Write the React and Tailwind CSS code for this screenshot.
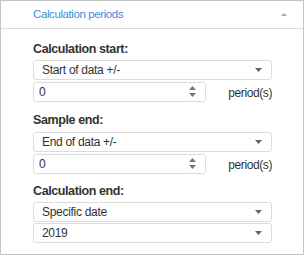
import React from "react";

const font = { fontFamily: '"Liberation Sans", Arial, sans-serif' };

function Caret() {
  return (
    <svg width="7" height="4" viewBox="0 0 7 4" className="shrink-0">
      <path d="M0 0 L7 0 L3.5 4 Z" fill="#666" />
    </svg>
  );
}

function Select({ value }) {
  return (
    <div className="h-5 w-[239px] flex items-center justify-between pl-2 pr-[9px] border border-[#dcdcdc] rounded-[3px] bg-white text-[12px] tracking-[-0.3px] text-[#333]">
      <span>{value}</span>
      <Caret />
    </div>
  );
}

function Spin() {
  return (
    <div className="w-[239px] flex items-center justify-between">
      <div className="h-5 w-[173px] flex items-center justify-between pl-[5px] pr-[9px] border border-[#dcdcdc] rounded-[3px] bg-white text-[12px] text-[#333]">
        <span>0</span>
        <svg width="7" height="11" viewBox="0 0 7 11">
          <path d="M0 4 L7 4 L3.5 0 Z" fill="#777" />
          <path d="M0 7 L7 7 L3.5 11 Z" fill="#777" />
        </svg>
      </div>
      <span className="text-[12px] tracking-[-0.4px] text-[#333] pt-[3px]">period(s)</span>
    </div>
  );
}

function Label({ children }) {
  return <div className="text-[12.5px] font-bold tracking-[-0.4px] text-[#333] leading-[16px]">{children}</div>;
}

export default function App() {
  return (
    <div style={font} className="w-[304px] h-[255px] bg-white border border-[#c4c4c4] flex flex-col">
      <div className="h-[28px] shrink-0 border-b border-[#dcdcdc] flex items-center justify-between pl-8 pr-4">
        <span className="text-[11.5px] tracking-[-0.4px] text-[#3a8fd9]">Calculation periods</span>
        <svg width="6" height="3" viewBox="0 0 6 3"><path d="M0 3 L6 3 L3 0 Z" fill="#aaa" /></svg>
      </div>
      <div className="flex flex-col pl-8 pt-[12px]">
        <Label>Calculation start:</Label>
        <div className="mt-[3px] flex flex-col gap-px">
          <Select value="Start of data +/-" />
          <Spin />
        </div>
        <div className="mt-[10px]"><Label>Sample end:</Label></div>
        <div className="mt-[4px] flex flex-col gap-px">
          <Select value="End of data +/-" />
          <Spin />
        </div>
        <div className="mt-[9px]"><Label>Calculation end:</Label></div>
        <div className="mt-[3px] flex flex-col gap-px">
          <Select value="Specific date" />
          <Select value="2019" />
        </div>
      </div>
    </div>
  );
}
